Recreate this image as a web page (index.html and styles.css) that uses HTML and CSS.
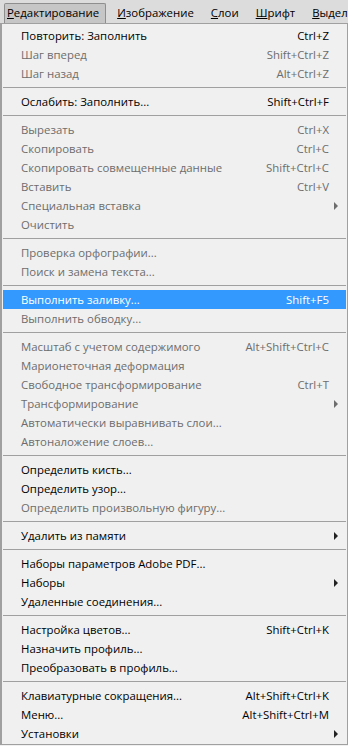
FILE: index.html
```html
<!DOCTYPE html>
<html lang="ru">
<head>
    <meta charset="UTF-8">
    <title>Редактирование</title>
    <link rel="stylesheet" href="styles.css">
</head>
<body>
    <div id="menu-bar">
        <span class="bar-item active"><u>Р</u>едактирование</span>
        <span class="bar-item"><u>И</u>зображение</span>
        <span class="bar-item"><u>С</u>лои</span>
        <span class="bar-item"><u>Ш</u>рифт</span>
        <span class="bar-item"><u>В</u>ыдел</span>
    </div>

    <div id="edit-menu">
        <div class="menu-item"><span>Повторить: Заполнить</span><span class="shortcut">Ctrl+Z</span></div>
        <div class="menu-item disabled"><span>Шаг вперед</span><span class="shortcut">Shift+Ctrl+Z</span></div>
        <div class="menu-item disabled"><span>Шаг назад</span><span class="shortcut">Alt+Ctrl+Z</span></div>
        <div class="separator"></div>
        <div class="menu-item"><span>Ослабить: Заполнить...</span><span class="shortcut">Shift+Ctrl+F</span></div>
        <div class="separator"></div>
        <div class="menu-item disabled"><span>Вырезать</span><span class="shortcut">Ctrl+X</span></div>
        <div class="menu-item disabled"><span>Скопировать</span><span class="shortcut">Ctrl+C</span></div>
        <div class="menu-item disabled"><span>Скопировать совмещенные данные</span><span class="shortcut">Shift+Ctrl+C</span></div>
        <div class="menu-item disabled"><span>Вставить</span><span class="shortcut">Ctrl+V</span></div>
        <div class="menu-item disabled submenu"><span>Специальная вставка</span></div>
        <div class="menu-item disabled"><span>Очистить</span></div>
        <div class="separator"></div>
        <div class="menu-item disabled"><span>Проверка орфографии...</span></div>
        <div class="menu-item disabled"><span>Поиск и замена текста...</span></div>
        <div class="separator"></div>
        <div class="menu-item selected"><span>Выполнить заливку...</span><span class="shortcut">Shift+F5</span></div>
        <div class="menu-item disabled"><span>Выполнить обводку...</span></div>
        <div class="separator"></div>
        <div class="menu-item disabled"><span>Масштаб с учетом содержимого</span><span class="shortcut">Alt+Shift+Ctrl+C</span></div>
        <div class="menu-item disabled"><span>Марионеточная деформация</span></div>
        <div class="menu-item disabled"><span>Свободное трансформирование</span><span class="shortcut">Ctrl+T</span></div>
        <div class="menu-item disabled submenu"><span>Трансформирование</span></div>
        <div class="menu-item disabled"><span>Автоматически выравнивать слои...</span></div>
        <div class="menu-item disabled"><span>Автоналожение слоев...</span></div>
        <div class="separator"></div>
        <div class="menu-item"><span>Определить кисть...</span></div>
        <div class="menu-item"><span>Определить узор...</span></div>
        <div class="menu-item disabled"><span>Определить произвольную фигуру...</span></div>
        <div class="separator"></div>
        <div class="menu-item submenu"><span>Удалить из памяти</span></div>
        <div class="separator"></div>
        <div class="menu-item"><span>Наборы параметров Adobe PDF...</span></div>
        <div class="menu-item submenu"><span>Наборы</span></div>
        <div class="menu-item"><span>Удаленные соединения...</span></div>
        <div class="separator"></div>
        <div class="menu-item"><span>Настройка цветов...</span><span class="shortcut">Shift+Ctrl+K</span></div>
        <div class="menu-item"><span>Назначить профиль...</span></div>
        <div class="menu-item"><span>Преобразовать в профиль...</span></div>
        <div class="separator"></div>
        <div class="menu-item"><span>Клавиатурные сокращения...</span><span class="shortcut">Alt+Shift+Ctrl+K</span></div>
        <div class="menu-item"><span>Меню...</span><span class="shortcut">Alt+Shift+Ctrl+M</span></div>
        <div class="menu-item submenu"><span>Установки</span></div>
    </div>
</body>
</html>
```

FILE: styles.css
```css
body {
    font-family: 'Open Sans', 'Noto Sans', sans-serif;
    font-size: 11.4px;
    background-color: #F0F0F0;
    color: #000;
    margin: 0;
    padding: 0;
    width: 348px;
    overflow: hidden;
}

#menu-bar {
    height: 23px;
    background-color: #DCDCDC;
    display: flex;
    align-items: flex-end;
    padding-left: 4px;
    white-space: nowrap;
    overflow: hidden;
}

.bar-item {
    height: 19px;
    line-height: 18px;
    padding: 0 6px 0 2px;
    margin-right: 7px;
    border: 1px solid transparent;
    border-bottom: none;
    flex-shrink: 0;
}

.bar-item.active {
    background-color: #C6C6C6;
    border-color: #8E8E8E;
    border-radius: 2px 2px 0 0;
    margin-right: 8px;
}

#edit-menu {
    border: 1px solid #A0A0A0;
    border-left-width: 2px;
    width: 344px;
    padding: 2px 0 1px 1px;
    background-color: #F0F0F0;
}

.menu-item {
    height: 19px;
    line-height: 19px;
    display: flex;
    justify-content: space-between;
    padding: 0 17px 0 18px;
    margin-right: 1px;
    white-space: nowrap;
    position: relative;
}

.menu-item.disabled {
    color: #6D6D6D;
}

.menu-item.selected {
    background-color: #3399FF;
    color: #fff;
}

.submenu::after {
    content: '';
    position: absolute;
    right: 8px;
    top: 6px;
    border-left: 4px solid #222;
    border-top: 4px solid transparent;
    border-bottom: 4px solid transparent;
}

.submenu.disabled::after {
    border-left-color: #6D6D6D;
}

.separator {
    height: 1px;
    background-color: #A0A0A0;
    margin: 4px 1px 4px 0;
}
```
